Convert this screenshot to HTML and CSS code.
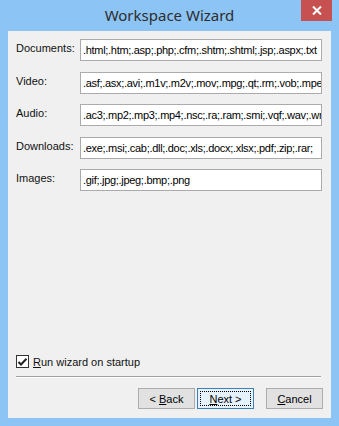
FILE: index.html
```html
<!DOCTYPE html>
<html lang="en">
<head>
    <meta charset="UTF-8">
    <title>Workspace Wizard</title>
    <link rel="stylesheet" href="styles.css">
</head>
<body>
    <div class="window">
        <div class="titlebar">
            <span class="title">Workspace Wizard</span>
            <div class="close-btn">
                <svg width="10" height="9" viewBox="0 0 10 9">
                    <path d="M1 0.5 L9 8.5 M9 0.5 L1 8.5" stroke="#fff" stroke-width="2"/>
                </svg>
            </div>
        </div>
        <div class="client">
            <div class="fields">
                <label class="field-label">Documents:</label>
                <div class="field-input">.html;.htm;.asp;.php;.cfm;.shtm;.shtml;.jsp;.aspx;.txt</div>
                <label class="field-label">Video:</label>
                <div class="field-input">.asf;.asx;.avi;.m1v;.m2v;.mov;.mpg;.qt;.rm;.vob;.mpeg;.wmv</div>
                <label class="field-label">Audio:</label>
                <div class="field-input">.ac3;.mp2;.mp3;.mp4;.nsc;.ra;.ram;.smi;.vqf;.wav;.wma</div>
                <label class="field-label">Downloads:</label>
                <div class="field-input">.exe;.msi;.cab;.dll;.doc;.xls;.docx;.xlsx;.pdf;.zip;.rar;</div>
                <label class="field-label">Images:</label>
                <div class="field-input">.gif;.jpg;.jpeg;.bmp;.png</div>
            </div>

            <div class="spacer"></div>

            <div class="startup">
                <span class="checkbox">
                    <svg width="9" height="8" viewBox="0 0 9 8">
                        <path d="M0.5 4 L3 6.5 L8.5 0.8" stroke="#222" stroke-width="2" fill="none"/>
                    </svg>
                </span>
                <span><u>R</u>un wizard on startup</span>
            </div>
            <div class="separator"></div>
            <div class="buttons">
                <div class="btn"><span>&lt; <u>B</u>ack</span></div>
                <div class="btn btn-default"><span class="focus"><span><u>N</u>ext &gt;</span></span></div>
                <div class="btn btn-cancel"><span><u>C</u>ancel</span></div>
            </div>
        </div>
    </div>
</body>
</html>
```

FILE: styles.css
```css
body {
    margin: 0;
    font-family: "Liberation Sans", Arial, sans-serif;
    font-size: 11px;
    color: #000;
}
.window {
    width: 339px;
    height: 426px;
    background-color: #8cc4f6;
    position: relative;
    overflow: hidden;
}
.titlebar {
    height: 31px;
    display: flex;
    justify-content: center;
    align-items: center;
}
.title {
    font-family: "Noto Sans", sans-serif;
    font-size: 15px;
    color: #2d2d2d;
    margin-top: -2px;
}
.close-btn {
    position: absolute;
    top: 0;
    left: 301px;
    width: 31px;
    height: 21px;
    background-color: #c75050;
    display: flex;
    justify-content: center;
    align-items: center;
}
.client {
    margin-left: 8px;
    width: 323px;
    height: 387px;
    background-color: #f0f0f0;
    box-sizing: border-box;
    padding: 8px 9px 9px 8px;
    display: flex;
    flex-direction: column;
}
.fields {
    display: grid;
    grid-template-columns: 64px 242px;
    row-gap: 10.5px;
    align-items: center;
}
.field-label {
    font-size: 11px;
    color: #111;
    margin-top: -4px;
}
.field-input {
    height: 22px;
    box-sizing: border-box;
    border: 1px solid #ababab;
    background-color: #fff;
    padding: 4px 2px 0 2px;
    white-space: nowrap;
    overflow: hidden;
    font-size: 11px;
    letter-spacing: -0.3px;
}
.spacer {
    flex: 1;
}
.startup {
    display: flex;
    align-items: center;
    gap: 4px;
    height: 13px;
    color: #111;
}
.checkbox {
    width: 13px;
    height: 13px;
    box-sizing: border-box;
    border: 1px solid #333;
    background-color: #fff;
    display: flex;
    justify-content: center;
    align-items: center;
}
.separator {
    margin-top: 8px;
    height: 1px;
    width: 305px;
    background-color: #a0a0a0;
    border-bottom: 1px solid #fff;
}
.buttons {
    margin-top: 10px;
    display: flex;
    justify-content: flex-end;
    gap: 2px;
    margin-right: -1px;
}
.btn {
    width: 57px;
    height: 21px;
    box-sizing: border-box;
    border: 1px solid #adadad;
    background-color: #e1e1e1;
    display: flex;
    justify-content: center;
    align-items: center;
    font-size: 11px;
}
.btn-default {
    border-color: #3c7fb1;
    background-color: #e5f1fb;
    padding: 2px;
}
.focus {
    width: 100%;
    height: 100%;
    border: 1px dotted #000;
    box-sizing: border-box;
    display: flex;
    justify-content: center;
    align-items: center;
}
.btn-cancel {
    margin-left: 10px;
}
```
